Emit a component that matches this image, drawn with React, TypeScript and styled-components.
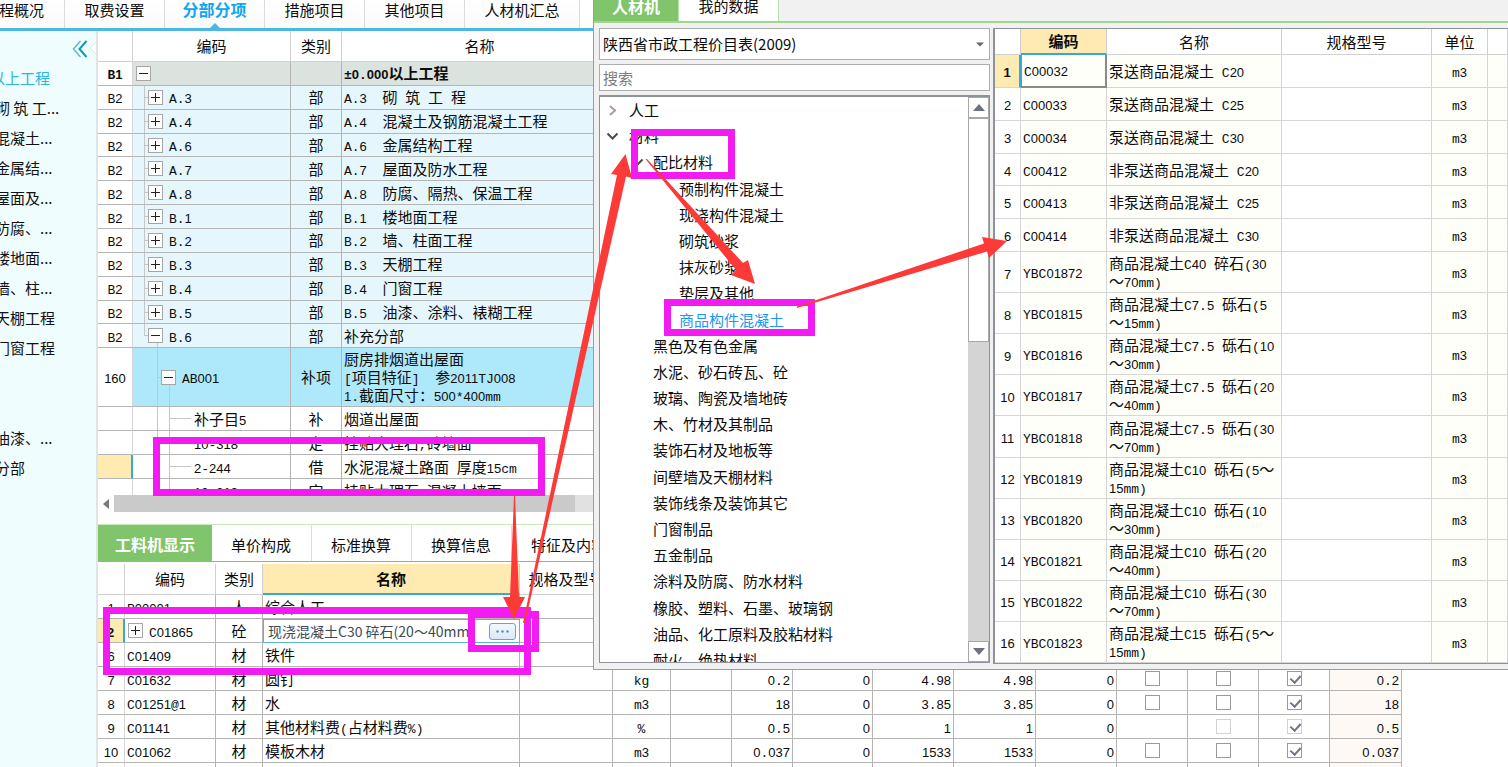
import React from "react";
import styled, { createGlobalStyle, css } from "styled-components";

const GlobalStyle = createGlobalStyle`
  * { box-sizing: border-box; }
  body {
    margin: 0;
    background: #fff;
    color: #0c0c0c;
    font: 15px/18px "Noto Sans CJK SC", sans-serif;
  }
  button, input, select { font: inherit; color: inherit; margin: 0; }
`;

/* ---------- text ---------- */

const Digits = styled.span`
  font-family: "Liberation Sans", sans-serif;
  font-size: 13px;
  line-height: 1;
`;

const Latin = styled.span`
  font-family: "Liberation Mono", monospace;
  font-size: 13px;
  line-height: 1;
`;

/* Sets digits and Latin runs at half the width of the Chinese characters. */
function Mixed({ children }: { children: string }) {
  const runs = children.match(/[0-9]+|[ -/:-~±]+|[^ -~±]+/g) || [];
  return (
    <>
      {runs.map((run, i) => {
        if (/^[0-9]/.test(run)) return <Digits key={i}>{run}</Digits>;
        if (/^[ -~±]/.test(run)) return <Latin key={i}>{run}</Latin>;
        return <React.Fragment key={i}>{run}</React.Fragment>;
      })}
    </>
  );
}

/* ---------- application shell ---------- */

const Shell = styled.div`
  position: relative;
  height: 100vh;
  overflow: hidden;
  display: flex;
  flex-direction: column;
`;

const TopTabs = styled.nav`
  display: flex;
  flex: none;
  height: 31px;
  border-bottom: 3px solid #4cb8e2;
`;

const TopTab = styled.button<{ $width: number; $active?: boolean; $cut?: boolean }>`
  position: relative;
  flex: none;
  display: flex;
  justify-content: ${(p) => (p.$cut ? "flex-end" : "center")};
  width: ${(p) => p.$width}px;
  padding: 0 ${(p) => (p.$cut ? 20 : 0)}px 0 0;
  border: 0;
  border-right: 1px solid #dcdcdc;
  background: linear-gradient(#fff, #fafafa);
  line-height: 20px;
  white-space: nowrap;
  ${(p) =>
    p.$active &&
    css`
      color: #0ea5f2;
      font-size: 16px;
      font-weight: 700;
      line-height: 18px;
      &::after {
        content: "";
        position: absolute;
        left: 50%;
        bottom: 0;
        margin-left: -5px;
        border: 5px solid transparent;
        border-top: 0;
        border-bottom-color: #4cb8e2;
      }
    `}
`;

const Body = styled.div`
  display: flex;
  flex: 1;
  min-height: 0;
`;

const Sidebar = styled.aside`
  position: relative;
  flex: none;
  width: 98px;
  overflow: hidden;
  padding-top: 32px;
  background: #f0fdff;
  border-right: 2px solid #e0e4e4;
`;

const Collapse = styled.button`
  position: absolute;
  top: 8px;
  left: 72px;
  width: 26px;
  height: 20px;
  padding: 0;
  border: 0;
  background: none;
  svg { display: block; }
`;

const SideList = styled.ul`
  list-style: none;
  margin: 0 0 0 -5px;
  padding: 0;
`;

const SideItem = styled.li<{ $active?: boolean }>`
  height: 30px;
  margin-left: ${(p) => (p.$active ? -5 : 0)}px;
  line-height: 30px;
  white-space: nowrap;
  color: ${(p) => (p.$active ? "#2bb3e2" : "#111")};
`;

const Main = styled.main`
  flex: 1;
  min-width: 0;
  overflow: hidden;
`;

/* ---------- grids ---------- */

const line = "#b5b5b5";
const yellow = "#ffebb2";
const blue = "#38a8d6";

const Grid = styled.table`
  border-collapse: separate;
  border-spacing: 0;
  table-layout: fixed;
  white-space: pre;
`;

const Head = styled.th<{ $active?: boolean }>`
  padding: 0;
  font-weight: ${(p) => (p.$active ? 700 : 400)};
  text-align: center;
  background: ${(p) => (p.$active ? yellow : "#fff")};
  border-right: 1px solid #d0d0d0;
  border-bottom: ${(p) => (p.$active ? `2px solid ${blue}` : "1px solid #d0d0d0")};
`;

const Cell = styled.td<{ $align?: string; $bg?: string; $bold?: boolean; $light?: boolean }>`
  padding: 0 2px;
  text-align: ${(p) => p.$align || "left"};
  background-color: ${(p) => p.$bg || "transparent"};
  font-weight: ${(p) => (p.$bold ? 700 : 400)};
  border-right: 1px solid ${(p) => (p.$light ? "#d6d6d6" : line)};
  border-bottom: 1px solid ${(p) => (p.$light ? "#d6d6d6" : line)};
  overflow: hidden;
`;

const NumCell = styled(Cell)<{ $current?: boolean }>`
  text-align: center;
  padding: 0;
  background: #fff;
  border-right-color: #d6d6d6;
  ${(p) =>
    p.$current &&
    css`
      background: ${yellow};
      border-right: 2px solid ${blue};
      font-weight: 700;
    `}
`;

const Toggle = styled.button<{ $open?: boolean }>`
  flex: none;
  position: relative;
  width: 15px;
  height: 15px;
  padding: 0;
  border: 1px solid #a6a6a6;
  background: #fff;
  &::before,
  &::after {
    content: "";
    position: absolute;
    background: #222;
  }
  &::before { left: 2px; top: 6px; width: 9px; height: 1px; }
  &::after { left: 6px; top: 2px; width: 1px; height: ${(p) => (p.$open ? 0 : 9)}px; }
`;

const CodeLine = styled.div<{ $indent: number }>`
  display: flex;
  align-items: center;
  gap: 6px;
  padding-left: ${(p) => p.$indent}px;
`;

/* ---------- bill of quantities ---------- */

const BillView = styled.div`
  height: 464px;
  overflow: hidden;
`;

const BillGrid = styled(Grid)`
  width: 520px;
  height: 472px;
  tbody tr { height: 23px; }
  tbody tr.tall { height: 57px; }
  thead tr { height: 31px; }
`;

const ink = "linear-gradient(#c6c6c6, #c6c6c6)";
const guides = {
  root: "none",
  part: `${ink} 11px 0 / 1px 100%, ${ink} 11px 50% / 5px 1px`,
  lastPart: `${ink} 11px 0 / 1px 50%, ${ink} 11px 50% / 5px 1px, ${ink} 24px 100% / 1px 30%`,
  item: `${ink} 24px 0 / 1px 100%, ${ink} 24px 50% / 4px 1px, ${ink} 36px 100% / 1px 40%`,
  leaf: `${ink} 24px 0 / 1px 100%, ${ink} 36px 0 / 1px 100%, ${ink} 36px 50% / 22px 1px`,
};
type Level = keyof typeof guides;

const indents: Record<Level, number> = { root: 3, part: 15, lastPart: 15, item: 28, leaf: 61 };

const TreeCell = styled(Cell)<{ $level: Level }>`
  padding: 0;
  background: ${(p) => guides[p.$level]};
  background-repeat: no-repeat;
  background-color: ${(p) => p.$bg};
`;

type BillRow = { no: string; code: string; kind: string; name: string; level: Level; current?: boolean };

const bill: BillRow[] = [
  { no: "B1", code: "", kind: "", name: "±0.000以上工程", level: "root" },
  { no: "B2", code: "A.3", kind: "部", name: "A.3  砌 筑 工 程", level: "part" },
  { no: "B2", code: "A.4", kind: "部", name: "A.4  混凝土及钢筋混凝土工程", level: "part" },
  { no: "B2", code: "A.6", kind: "部", name: "A.6  金属结构工程", level: "part" },
  { no: "B2", code: "A.7", kind: "部", name: "A.7  屋面及防水工程", level: "part" },
  { no: "B2", code: "A.8", kind: "部", name: "A.8  防腐、隔热、保温工程", level: "part" },
  { no: "B2", code: "B.1", kind: "部", name: "B.1  楼地面工程", level: "part" },
  { no: "B2", code: "B.2", kind: "部", name: "B.2  墙、柱面工程", level: "part" },
  { no: "B2", code: "B.3", kind: "部", name: "B.3  天棚工程", level: "part" },
  { no: "B2", code: "B.4", kind: "部", name: "B.4  门窗工程", level: "part" },
  { no: "B2", code: "B.5", kind: "部", name: "B.5  油漆、涂料、裱糊工程", level: "part" },
  { no: "B2", code: "B.6", kind: "部", name: "补充分部", level: "lastPart" },
  { no: "160", code: "AB001", kind: "补项", name: "厨房排烟道出屋面\n[项目特征]  参2011TJ008\n1.截面尺寸：500*400mm", level: "item" },
  { no: "", code: "补子目5", kind: "补", name: "烟道出屋面", level: "leaf" },
  { no: "", code: "10-318", kind: "定", name: "挂贴大理石,砖墙面", level: "leaf" },
  { no: "", code: "2-244", kind: "借", name: "水泥混凝土路面 厚度15cm", level: "leaf", current: true },
  { no: "", code: "10-319", kind: "定", name: "挂贴大理石 混凝土墙面", level: "leaf" },
];

const rowColor: Record<Level, string> = {
  root: "#dbe3de",
  part: "#e5f7fd",
  lastPart: "#e5f7fd",
  item: "#aee9fb",
  leaf: "#fff",
};

function Bill() {
  return (
    <BillView>
      <BillGrid>
        <colgroup>
          <col style={{ width: 35 }} />
          <col style={{ width: 158 }} />
          <col style={{ width: 51 }} />
          <col style={{ width: 276 }} />
        </colgroup>
        <thead>
          <tr>
            <Head />
            <Head>编码</Head>
            <Head>类别</Head>
            <Head>名称</Head>
          </tr>
        </thead>
        <tbody>
          {bill.map((r, i) => {
            const bg = rowColor[r.level];
            return (
              <tr key={i} className={r.level === "item" ? "tall" : undefined}>
                <NumCell $current={r.current} $bold={r.level === "root"}>
                  <Mixed>{r.no}</Mixed>
                </NumCell>
                <TreeCell $level={r.level} $bg={bg}>
                  <CodeLine $indent={indents[r.level]}>
                    {r.level !== "leaf" && <Toggle $open={r.level !== "part"} aria-label="展开或折叠" />}
                    <span><Mixed>{r.code}</Mixed></span>
                  </CodeLine>
                </TreeCell>
                <Cell $align="center" $bg={bg}>{r.kind}</Cell>
                <Cell $bg={bg} $bold={r.level === "root"}><Mixed>{r.name}</Mixed></Cell>
              </tr>
            );
          })}
        </tbody>
      </BillGrid>
    </BillView>
  );
}

const HScroll = styled.div`
  display: flex;
  width: 520px;
  height: 17px;
  background: #e1e1e1;
`;

const ScrollButton = styled.button`
  flex: none;
  display: flex;
  align-items: center;
  justify-content: center;
  width: 16px;
  padding: 0;
  border: 0;
  background: #fff;
`;

const HThumb = styled.div`
  width: 461px;
  background: #cacaca;
`;

/* ---------- resource panel ---------- */

const green = "#80c46c";

const PanelTabs = styled.nav`
  display: flex;
  height: 38px;
  margin: 12px 0 2px;
  border-top: 1px solid #c8ebbd;
  border-bottom: 1px solid ${green};
`;

const PanelTab = styled.button<{ $active?: boolean }>`
  flex: none;
  padding: 4px 20px 0 19px;
  border: 0;
  border-right: 1px solid #c8ebbd;
  background: #fff;
  ${(p) =>
    p.$active &&
    css`
      width: 114px;
      padding: 2px 0 0;
      border-right: 0;
      background: ${green};
      color: #fff;
      font-size: 16px;
      font-weight: 700;
    `}
`;

const ResourceGrid = styled(Grid)`
  width: 1304px;
  thead tr { height: 31px; }
  tbody tr { height: 24px; }
`;

const EditCell = styled(Cell)`
  padding: 0;
  border: 1px solid #58b4dc;
`;

const Editor = styled.div`
  display: flex;
  align-items: center;
  padding: 0 3px 0 4px;
`;

const EditInput = styled.input`
  flex: 1;
  min-width: 0;
  height: 20px;
  padding: 0;
  border: 0;
  outline: 0;
  background: none;
  color: #3c4a58;
  font-size: 14px;
`;

const MoreButton = styled.button`
  display: flex;
  align-items: center;
  justify-content: center;
  width: 27px;
  height: 17px;
  padding: 0;
  border: 1px solid #5fa4e6;
  border-radius: 3px;
  background: linear-gradient(#f2f8fe, #dce8f5);
`;

const Check = styled.input`
  appearance: none;
  position: relative;
  display: block;
  width: 15px;
  height: 15px;
  margin: 0 auto;
  border: 1px solid #9a9a9a;
  background: #fff;
  &:disabled { border-color: #d2d2d2; }
  &:checked::after {
    content: "";
    position: absolute;
    left: 4px;
    top: 1px;
    width: 5px;
    height: 8px;
    border: solid #70748a;
    border-width: 0 2px 2px 0;
    transform: rotate(42deg);
  }
`;

const resourceCols = [27, 91, 47, 257, 93, 58, 61, 61, 80, 81, 82, 81, 71, 71, 71, 72];

type Resource = { no: string; code: string; kind: string; name: string; v: string[]; checks?: string };

const resources: Resource[] = [
  { no: "1", code: "R00001", kind: "人", name: "综合人工", v: [] },
  { no: "2", code: "C01865", kind: "砼", name: "现浇混凝土C30 碎石(20～40mm)", v: [] },
  { no: "6", code: "C01409", kind: "材", name: "铁件", v: [] },
  { no: "7", code: "C01632", kind: "材", name: "圆钉", v: ["kg", "", "0.2", "0", "4.98", "4.98", "0", "0.2"], checks: "oox" },
  { no: "8", code: "C01251@1", kind: "材", name: "水", v: ["m3", "", "18", "0", "3.85", "3.85", "0", "18"], checks: "oox" },
  { no: "9", code: "C01141", kind: "材", name: "其他材料费(占材料费%)", v: ["%", "", "0.5", "0", "1", "1", "0", "0.5"], checks: " dD" },
  { no: "10", code: "C01062", kind: "材", name: "模板木材", v: ["m3", "", "0.037", "0", "1533", "1533", "0", "0.037"], checks: "oox" },
  { no: "", code: "", kind: "", name: "", v: [], checks: " oo" },
];

function Resources() {
  return (
    <ResourceGrid>
      <colgroup>
        {resourceCols.map((w, i) => <col key={i} style={{ width: w }} />)}
      </colgroup>
      <thead>
        <tr>
          <Head />
          <Head>编码</Head>
          <Head>类别</Head>
          <Head $active>名称</Head>
          <Head>规格及型号</Head>
          {resourceCols.slice(5).map((_, i) => <Head key={i} />)}
        </tr>
      </thead>
      <tbody>
        {resources.map((r, i) => {
          const editing = r.no === "2";
          return (
            <tr key={i}>
              <NumCell $current={editing}><Mixed>{r.no}</Mixed></NumCell>
              <Cell>
                {editing || !r.no ? (
                  <CodeLine $indent={1}>
                    <Toggle aria-label="展开" />
                    <span><Mixed>{r.code}</Mixed></span>
                  </CodeLine>
                ) : (
                  <Mixed>{r.code}</Mixed>
                )}
              </Cell>
              <Cell $align="center">{r.kind}</Cell>
              {editing ? (
                <EditCell>
                  <Editor>
                    <EditInput aria-label="名称" defaultValue={r.name} />
                    <MoreButton aria-label="选择">
                      <svg width="13" height="3" viewBox="0 0 13 3" fill="#4a8fd4">
                        <circle cx="1.5" cy="1.5" r="1.2" />
                        <circle cx="6.5" cy="1.5" r="1.2" />
                        <circle cx="11.5" cy="1.5" r="1.2" />
                      </svg>
                    </MoreButton>
                  </Editor>
                </EditCell>
              ) : (
                <Cell><Mixed>{r.name}</Mixed></Cell>
              )}
              <Cell />
              {[0, 1, 2, 3, 4, 5, 6].map((k) => (
                <Cell key={k} $align={k === 0 ? "center" : "right"}><Mixed>{r.v[k] || ""}</Mixed></Cell>
              ))}
              {[0, 1, 2].map((k) => {
                const c = (r.checks || "   ")[k];
                return (
                  <Cell key={k}>
                    {c !== " " && (
                      <Check
                        type="checkbox"
                        aria-label={`${r.name} ${k + 1}`}
                        defaultChecked={c === "x" || c === "D"}
                        disabled={c === "d" || c === "D"}
                      />
                    )}
                  </Cell>
                );
              })}
              <Cell $align="right" $bg="#fef9f4"><Mixed>{r.v[7] || ""}</Mixed></Cell>
            </tr>
          );
        })}
      </tbody>
    </ResourceGrid>
  );
}

/* ---------- lookup window ---------- */

const Lookup = styled.section`
  position: absolute;
  top: 0;
  left: 593px;
  right: 0;
  overflow: hidden;
  background: #f1f1f1;
  border-left: 1px solid #9c9c9c;
  border-bottom: 1px solid #9c9c9c;
`;

const LookupTabs = styled.nav`
  display: flex;
  height: 23px;
  border-bottom: 2px solid #9fd691;
`;

const LookupTab = styled.button<{ $active?: boolean }>`
  width: ${(p) => (p.$active ? 85 : 100)}px;
  padding: 0 0 10px;
  border: 0;
  border-right: 1px solid #b5e2a8;
  background: ${(p) => (p.$active ? green : "#fff")};
  color: ${(p) => (p.$active ? "#fff" : "#111")};
  font-size: ${(p) => (p.$active ? 16 : 15)}px;
  font-weight: ${(p) => (p.$active ? 700 : 400)};
  line-height: 10px;
`;

const LookupBody = styled.div`
  display: flex;
  align-items: flex-start;
  gap: 3px;
  padding: 5px 0 5px 5px;
`;

const Picker = styled.div`
  flex: none;
  display: flex;
  flex-direction: column;
  gap: 4px;
  width: 391px;
`;

const SelectWrap = styled.div`
  position: relative;
  height: 32px;
  svg { position: absolute; right: 6px; top: 14px; }
`;

const Source = styled.select`
  appearance: none;
  display: block;
  width: 100%;
  height: 100%;
  padding: 0 3px;
  border: 1px solid #adadad;
  border-radius: 0;
  background: #fff;
`;

const Search = styled.input`
  height: 27px;
  padding: 0 3px;
  border: 1px solid #adadad;
  border-radius: 0;
  &::placeholder { color: #7c7c7c; opacity: 1; }
`;

const TreeBox = styled.div`
  height: 568px;
  display: flex;
  overflow: hidden;
  background: #fff;
  border: 1px solid #8d929b;
  border-top-width: 2px;
`;

const TreeList = styled.ul`
  flex: 1;
  display: grid;
  grid-auto-rows: 1fr;
  height: 576px;
  margin: 0;
  padding: 0;
  list-style: none;
`;

const TreeItem = styled.li<{ $depth: number; $active?: boolean }>`
  display: flex;
  align-items: center;
  padding-left: ${(p) => [6, 31, 79][p.$depth]}px;
  color: ${(p) => (p.$active ? "#1e96f0" : "inherit")};
`;

const Twist = styled.span<{ $narrow?: boolean }>`
  flex: none;
  display: flex;
  width: ${(p) => (p.$narrow ? 22 : 23)}px;
`;

const VScroll = styled.div`
  display: flex;
  flex-direction: column;
  width: 21px;
  background: #d4d4d4;
`;

const VButton = styled(ScrollButton)`
  width: auto;
  height: 21px;
  border: 1px solid #a8a8a8;
`;

const VThumb = styled.div`
  height: 224px;
  margin-bottom: auto;
  background: #fff;
  border: 1px solid #a8a8a8;
`;

type Node = { depth: number; name: string; twist?: "open" | "shut"; active?: boolean };

const nodes: Node[] = [
  { depth: 0, name: "人工", twist: "shut" },
  { depth: 0, name: "材料", twist: "open" },
  { depth: 1, name: "配比材料", twist: "open" },
  ...["预制构件混凝土", "现浇构件混凝土", "砌筑砂浆", "抹灰砂浆", "垫层及其他"].map((name) => ({ depth: 2, name })),
  { depth: 2, name: "商品构件混凝土", active: true },
  ...[
    "黑色及有色金属", "水泥、砂石砖瓦、砼", "玻璃、陶瓷及墙地砖", "木、竹材及其制品",
    "装饰石材及地板等", "间壁墙及天棚材料", "装饰线条及装饰其它", "门窗制品", "五金制品",
    "涂料及防腐、防水材料", "橡胶、塑料、石墨、玻璃钢", "油品、化工原料及胶粘材料", "耐火、绝热材料",
  ].map((name) => ({ depth: 1, name })),
];

function Chevron({ open }: { open: boolean }) {
  return (
    <svg width="13" height="13" viewBox="0 0 13 13" fill="none" strokeWidth="2" stroke={open ? "#4a4a4a" : "#a0a0a0"}>
      <path d={open ? "M1.5 3.5 L6.5 8.5 L11.5 3.5" : "M4 2 L9 6.5 L4 11"} />
    </svg>
  );
}

const ResultFrame = styled.div`
  flex: 1;
  min-width: 0;
  overflow: hidden;
  background: #fff;
  border: solid #8d929b;
  border-width: 1px 0 1px 2px;
`;

const ResultGrid = styled(Grid)`
  width: 100%;
  min-width: 513px;
  height: 634px;
  thead tr { height: 26px; }
  tbody tr { height: 32px; }
  tbody tr.tall { height: 40px; line-height: 17px; }
`;

const CurrentCell = styled(Cell)`
  border: 2px solid #8a8a8a;
  border-top-width: 0;
  border-left: 1px solid ${blue};
`;

const ivory = "#fffffa";

const results: [string, string][] = [
  ["C00032", "泵送商品混凝土 C20"],
  ["C00033", "泵送商品混凝土 C25"],
  ["C00034", "泵送商品混凝土 C30"],
  ["C00412", "非泵送商品混凝土 C20"],
  ["C00413", "非泵送商品混凝土 C25"],
  ["C00414", "非泵送商品混凝土 C30"],
  ["YBC01872", "商品混凝土C40 碎石(30\n～70mm)"],
  ["YBC01815", "商品混凝土C7.5 砾石(5\n～15mm)"],
  ["YBC01816", "商品混凝土C7.5 砾石(10\n～30mm)"],
  ["YBC01817", "商品混凝土C7.5 砾石(20\n～40mm)"],
  ["YBC01818", "商品混凝土C7.5 砾石(30\n～70mm)"],
  ["YBC01819", "商品混凝土C10 砾石(5～\n15mm)"],
  ["YBC01820", "商品混凝土C10 砾石(10\n～30mm)"],
  ["YBC01821", "商品混凝土C10 砾石(20\n～40mm)"],
  ["YBC01822", "商品混凝土C10 砾石(30\n～70mm)"],
  ["YBC01823", "商品混凝土C15 砾石(5～\n15mm)"],
];

function LookupWindow() {
  return (
    <Lookup>
      <LookupTabs>
        <LookupTab $active>人材机</LookupTab>
        <LookupTab>我的数据</LookupTab>
      </LookupTabs>
      <LookupBody>
        <Picker>
          <SelectWrap>
            <Source aria-label="价目表">
              <option>陕西省市政工程价目表(2009)</option>
            </Source>
            <svg width="8" height="5" viewBox="0 0 8 5" fill="#666"><path d="M0 0.5H8L4 4.5Z" /></svg>
          </SelectWrap>
          <Search placeholder="搜索" aria-label="搜索" />
          <TreeBox>
            <TreeList>
              {nodes.map((n) => (
                <TreeItem key={n.name} $depth={n.depth} $active={n.active}>
                  {n.depth < 2 && (
                    <Twist $narrow={n.depth === 1}>{n.twist && <Chevron open={n.twist === "open"} />}</Twist>
                  )}
                  {n.name}
                </TreeItem>
              ))}
            </TreeList>
            <VScroll>
              <VButton aria-label="向上">
                <svg width="12" height="7" viewBox="0 0 12 7" fill="#6d7180"><path d="M0 7 L6 0 L12 7Z" /></svg>
              </VButton>
              <VThumb />
              <VButton aria-label="向下">
                <svg width="12" height="7" viewBox="0 0 12 7" fill="#6d7180"><path d="M0 0 L6 7 L12 0Z" /></svg>
              </VButton>
            </VScroll>
          </TreeBox>
        </Picker>
        <ResultFrame>
          <ResultGrid>
            <colgroup>
              {[26, 86, 175, 150, 56].map((w, i) => <col key={i} style={{ width: w }} />)}
              <col />
            </colgroup>
            <thead>
              <tr>
                <Head />
                <Head $active>编码</Head>
                <Head>名称</Head>
                <Head>规格型号</Head>
                <Head>单位</Head>
                <Head />
              </tr>
            </thead>
            <tbody>
              {results.map(([code, name], i) => {
                const Code = i === 0 ? CurrentCell : Cell;
                return (
                  <tr key={code} className={i > 5 ? "tall" : undefined}>
                    <NumCell $light $current={i === 0}><Mixed>{String(i + 1)}</Mixed></NumCell>
                    <Code $light $bg={ivory}><Mixed>{code}</Mixed></Code>
                    <Cell $light $bg={ivory}><Mixed>{name}</Mixed></Cell>
                    <Cell $light />
                    <Cell $light $align="center" $bg={ivory}><Mixed>m3</Mixed></Cell>
                    <Cell $light $bg={ivory} />
                  </tr>
                );
              })}
            </tbody>
          </ResultGrid>
        </ResultFrame>
      </LookupBody>
    </Lookup>
  );
}

/* ---------- markup drawn over the screen ---------- */

const Markup = styled.svg`
  position: absolute;
  top: 0;
  left: 0;
  pointer-events: none;
`;

function Annotations() {
  return (
    <Markup width="1508" height="767" viewBox="0 0 1508 767" aria-hidden="true">
      <g fill="none" stroke="#f21cf2" strokeWidth="7">
        <rect x="156.5" y="440.5" width="385" height="52" />
        <rect x="106.5" y="610.5" width="421" height="61" />
        <rect x="471.5" y="614.5" width="64" height="34" />
        <rect x="634.5" y="132.5" width="97" height="43" />
        <rect x="667.5" y="302.5" width="144" height="30" />
      </g>
      <g fill="#fc3a37">
        <path d="M514 496 L515 496 L519 597 L525 597 L514 619 L503 597 L510 597Z" />
        <path d="M523 623 L617 175 L611 174 L625.5 154 L632 178 L626 176.5 L525 623Z" />
        <path d="M645.5 159 L647 159 L743 263 L748 260 L755 284 L731 275 L736 270Z" />
        <path d="M797 306.5 L984 243.5 L982 237 L1007 241 L989 258 L987 251.5 L797 308Z" />
      </g>
    </Markup>
  );
}

const sideItems = ["以上工程", "砌 筑 工...", "混凝土...", "金属结...", "屋面及...", "防腐、...", "楼地面...", "墙、柱...", "天棚工程", "门窗工程", "", "", "油漆、...", "分部"];

export default function App() {
  return (
    <>
      <GlobalStyle />
      <Shell>
        <TopTabs>
          <TopTab $width={65} $cut>工程概况</TopTab>
          <TopTab $width={100}>取费设置</TopTab>
          <TopTab $width={100} $active>分部分项</TopTab>
          <TopTab $width={100}>措施项目</TopTab>
          <TopTab $width={100}>其他项目</TopTab>
          <TopTab $width={115}>人材机汇总</TopTab>
        </TopTabs>
        <Body>
          <Sidebar>
            <Collapse aria-label="收起">
              <svg width="26" height="20" viewBox="0 0 26 20" fill="none">
                <path d="M26 1 L18 9 L26 17Z" fill="#fff" stroke="#dde4e4" />
                <path d="M8.5 2 L1.5 10 L8.5 18" stroke="#58bcd4" strokeWidth="1.5" />
                <path d="M14.5 2 L7.5 10 L14.5 18" stroke="#1496b8" strokeWidth="2" />
              </svg>
            </Collapse>
            <SideList>
              {sideItems.map((t, i) => <SideItem key={i} $active={i === 0}>{t}</SideItem>)}
            </SideList>
          </Sidebar>
          <Main>
            <Bill />
            <HScroll>
              <ScrollButton aria-label="向左">
                <svg width="6" height="10" viewBox="0 0 6 10" fill="#777"><path d="M6 0V10L0 5Z" /></svg>
              </ScrollButton>
              <HThumb />
            </HScroll>
            <PanelTabs>
              <PanelTab $active>工料机显示</PanelTab>
              <PanelTab>单价构成</PanelTab>
              <PanelTab>标准换算</PanelTab>
              <PanelTab>换算信息</PanelTab>
              <PanelTab>特征及内容</PanelTab>
            </PanelTabs>
            <Resources />
          </Main>
        </Body>
        <LookupWindow />
        <Annotations />
      </Shell>
    </>
  );
}
